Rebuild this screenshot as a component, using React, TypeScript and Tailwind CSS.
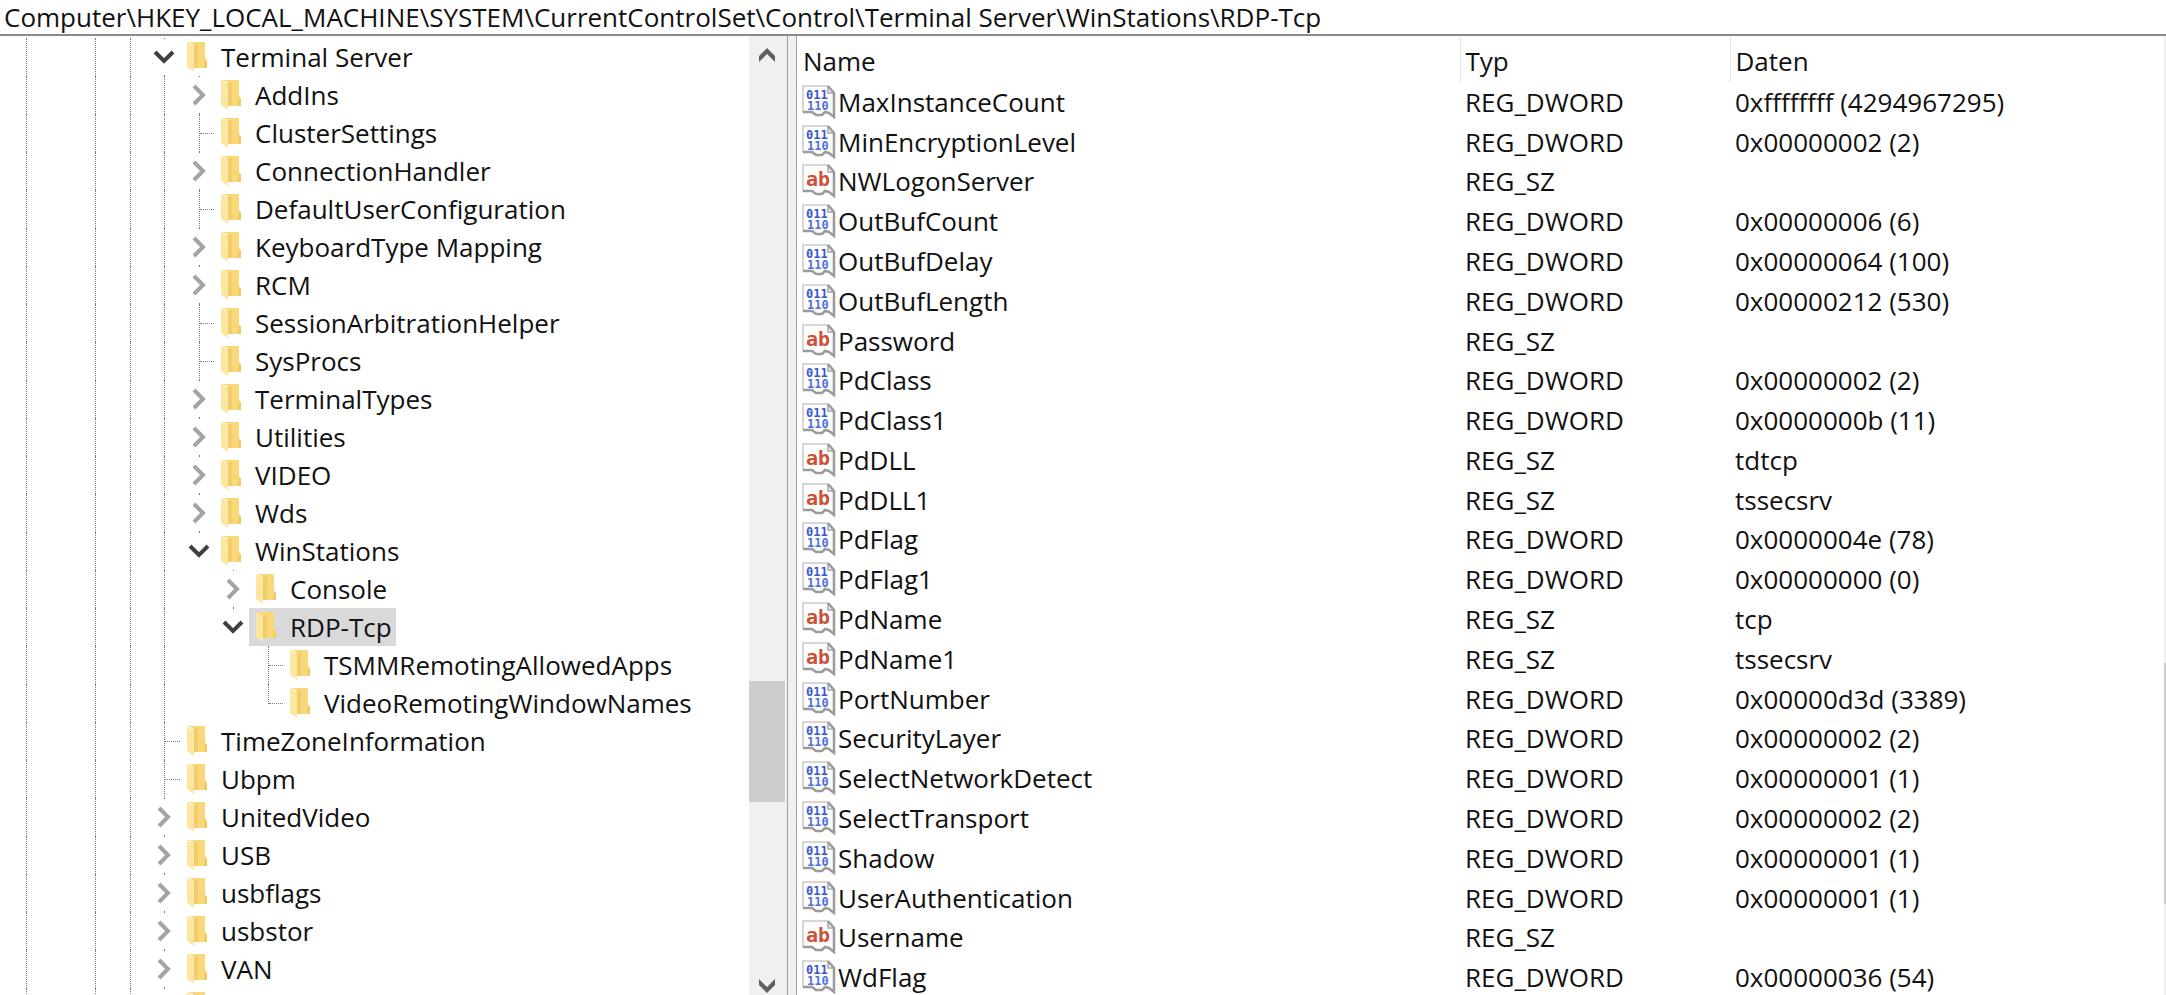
import React, { useState } from 'react';
import { clsx } from 'clsx';

interface TreeNode {
  label: string;
  depth: number;
  state?: 'open' | 'closed';
  last?: boolean;
}

interface RegistryValue {
  name: string;
  type: 'REG_DWORD' | 'REG_SZ';
  data: string;
}

const treeNodes: TreeNode[] = [
  { label: 'Terminal Server', depth: 4, state: 'open' },
  { label: 'AddIns', depth: 5, state: 'closed' },
  { label: 'ClusterSettings', depth: 5 },
  { label: 'ConnectionHandler', depth: 5, state: 'closed' },
  { label: 'DefaultUserConfiguration', depth: 5 },
  { label: 'KeyboardType Mapping', depth: 5, state: 'closed' },
  { label: 'RCM', depth: 5, state: 'closed' },
  { label: 'SessionArbitrationHelper', depth: 5 },
  { label: 'SysProcs', depth: 5 },
  { label: 'TerminalTypes', depth: 5, state: 'closed' },
  { label: 'Utilities', depth: 5, state: 'closed' },
  { label: 'VIDEO', depth: 5, state: 'closed' },
  { label: 'Wds', depth: 5, state: 'closed' },
  { label: 'WinStations', depth: 5, state: 'open', last: true },
  { label: 'Console', depth: 6, state: 'closed' },
  { label: 'RDP-Tcp', depth: 6, state: 'open', last: true },
  { label: 'TSMMRemotingAllowedApps', depth: 7 },
  { label: 'VideoRemotingWindowNames', depth: 7, last: true },
  { label: 'TimeZoneInformation', depth: 4 },
  { label: 'Ubpm', depth: 4 },
  { label: 'UnitedVideo', depth: 4, state: 'closed' },
  { label: 'USB', depth: 4, state: 'closed' },
  { label: 'usbflags', depth: 4, state: 'closed' },
  { label: 'usbstor', depth: 4, state: 'closed' },
  { label: 'VAN', depth: 4, state: 'closed' },
  { label: '', depth: 4, state: 'closed' },
];

const values: RegistryValue[] = [
  { name: 'MaxInstanceCount', type: 'REG_DWORD', data: '0xffffffff (4294967295)' },
  { name: 'MinEncryptionLevel', type: 'REG_DWORD', data: '0x00000002 (2)' },
  { name: 'NWLogonServer', type: 'REG_SZ', data: '' },
  { name: 'OutBufCount', type: 'REG_DWORD', data: '0x00000006 (6)' },
  { name: 'OutBufDelay', type: 'REG_DWORD', data: '0x00000064 (100)' },
  { name: 'OutBufLength', type: 'REG_DWORD', data: '0x00000212 (530)' },
  { name: 'Password', type: 'REG_SZ', data: '' },
  { name: 'PdClass', type: 'REG_DWORD', data: '0x00000002 (2)' },
  { name: 'PdClass1', type: 'REG_DWORD', data: '0x0000000b (11)' },
  { name: 'PdDLL', type: 'REG_SZ', data: 'tdtcp' },
  { name: 'PdDLL1', type: 'REG_SZ', data: 'tssecsrv' },
  { name: 'PdFlag', type: 'REG_DWORD', data: '0x0000004e (78)' },
  { name: 'PdFlag1', type: 'REG_DWORD', data: '0x00000000 (0)' },
  { name: 'PdName', type: 'REG_SZ', data: 'tcp' },
  { name: 'PdName1', type: 'REG_SZ', data: 'tssecsrv' },
  { name: 'PortNumber', type: 'REG_DWORD', data: '0x00000d3d (3389)' },
  { name: 'SecurityLayer', type: 'REG_DWORD', data: '0x00000002 (2)' },
  { name: 'SelectNetworkDetect', type: 'REG_DWORD', data: '0x00000001 (1)' },
  { name: 'SelectTransport', type: 'REG_DWORD', data: '0x00000002 (2)' },
  { name: 'Shadow', type: 'REG_DWORD', data: '0x00000001 (1)' },
  { name: 'UserAuthentication', type: 'REG_DWORD', data: '0x00000001 (1)' },
  { name: 'Username', type: 'REG_SZ', data: '' },
  { name: 'WdFlag', type: 'REG_DWORD', data: '0x00000036 (54)' },
];

// Ancestor levels that still have siblings further down
const guideLevels = [0, 2, 3, 4];

const FolderIcon = () => (
  <svg width="20" height="30" viewBox="0 0 20 30" className="shrink-0" aria-hidden="true">
    <path d="M1 0h17v16l2 3v7H6V2z" fill="#f8d878" />
    <path d="M7 3l4-1v24H7z" fill="#e9c25f" opacity="0.45" />
    <path d="M18 17l2 2v7h-3z" fill="#f0c95f" />
    <path d="M0 0l7 4v26l-7-5z" fill="#fde7a0" />
  </svg>
);

const ValueIcon = ({ type }: { type: RegistryValue['type'] }) => (
  <svg width="34" height="34" viewBox="0 0 34 34" className="shrink-0" aria-hidden="true">
    <path d="M1 1h25l7 7v25l-5-4-4-1-3 2h-7l-4-3H1z" fill="#fdfdfd" />
    <path d="M1 27V1h25" fill="none" stroke="#c9c9c9" strokeWidth="1.5" />
    <path d="M26 1v7h7" fill="#f4f4f4" stroke="#a8a8a8" strokeWidth="1.5" />
    <path d="M26 1l6 7v24l-5-4-4-1-3 3h-6l-4-3H1" fill="none" stroke="#9b9b9b" strokeWidth="2.5" />
    {type === 'REG_DWORD' ? (
      <g fill="#3757cc" fontFamily="'DejaVu Sans Mono', monospace" fontWeight="700" fontSize="12">
        <text x="4" y="14">011</text>
        <text x="5" y="25" fill="#4f70dc">110</text>
      </g>
    ) : (
      <text x="4" y="22" fill="#cc5238" fontFamily="'DejaVu Sans Mono', monospace" fontWeight="700" fontSize="20">
        ab
      </text>
    )}
  </svg>
);

const Expander = ({ open }: { open: boolean }) => (
  <svg width="22" height="22" viewBox="0 0 22 22" fill="none" strokeWidth="4" aria-hidden="true">
    {open ? <path d="M2 6l9 9 9-9" stroke="#404040" /> : <path d="M6 2l9 9-9 9" stroke="#a3a3a3" />}
  </svg>
);

const TreeRow = ({ node, selected, onSelect }: { node: TreeNode; selected: boolean; onSelect: () => void }) => (
  <li className="flex h-[38px] pl-[7px]" role="treeitem" aria-selected={selected}>
    {Array.from({ length: node.depth + 1 }, (_, level) => {
      const own = level === node.depth;
      return (
        <div key={level} className={clsx('flex shrink-0', level % 2 === 0 ? 'w-[35px]' : 'w-[34px]')}>
          {!own && guideLevels.includes(level) && (
            <div className="ml-[19px] border-l border-dotted border-[#7c7c7c]" />
          )}
          {own && node.state && (
            <div className="flex w-full flex-col justify-between pl-[8px]">
              <div className="ml-[11px] h-px w-px bg-[#7c7c7c]" />
              <button type="button" aria-label={`${node.state === 'open' ? 'Collapse' : 'Expand'} ${node.label}`}>
                <Expander open={node.state === 'open'} />
              </button>
              <div className={clsx('ml-[11px] h-px w-px', !node.last && 'bg-[#7c7c7c]')} />
            </div>
          )}
          {own && !node.state && (
            <div className={clsx('ml-[19px] w-4 border-l border-dotted border-[#7c7c7c]', node.last && 'h-[20px]')}>
              <div className="h-[20px] border-b border-dotted border-[#7c7c7c]" />
            </div>
          )}
        </div>
      );
    })}
    <button
      type="button"
      onClick={onSelect}
      className={clsx('flex items-center gap-[14px] whitespace-nowrap pl-[7px] pr-1', selected && 'bg-[#d9d9d9]')}
    >
      <FolderIcon />
      {node.label}
    </button>
  </li>
);

const ScrollArrow = ({ up }: { up?: boolean }) => (
  <button type="button" aria-label={up ? 'Scroll up' : 'Scroll down'} className="flex h-[18px] w-9 shrink-0 items-center justify-center">
    <svg width="16" height="14" viewBox="0 0 16 14" aria-hidden="true">
      <path d={up ? 'M8 0l8 8v6L8 6l-8 8V8z' : 'M8 14l8-8V0L8 8 0 0v6z'} fill="#606060" />
    </svg>
  </button>
);

const KeyTree = () => {
  const [selected, setSelected] = useState('RDP-Tcp');
  return (
    <nav className="flex w-[788px] shrink-0 border-r border-[#a0a0a0]" aria-label="Registry keys">
      <ul className="min-w-0 flex-1 overflow-hidden pt-[2px]" role="tree">
        {treeNodes.map((node) => (
          <TreeRow
            key={node.label}
            node={node}
            selected={node.label === selected}
            onSelect={() => setSelected(node.label)}
          />
        ))}
      </ul>
      <div className="flex w-[38px] flex-col bg-[#f0f0f0] pt-[10px]">
        <ScrollArrow up />
        <div className="flex flex-1 flex-col">
          <div className="grow-[617]" />
          <div className="w-9 grow-[121] bg-[#cdcdcd]" />
          <div className="grow-[175]" />
        </div>
        <ScrollArrow />
      </div>
    </nav>
  );
};

const ValueList = () => (
  <table className="h-[calc(100%+2px)] w-full table-fixed border-collapse text-left">
    <colgroup>
      <col className="w-[663px]" />
      <col className="w-[270px]" />
      <col />
    </colgroup>
    <thead>
      <tr className="h-[46px]">
        <th className="border-r border-[#e5e5e5] p-0 pt-[3px] pl-[6px] font-normal">Name</th>
        <th className="border-r border-[#e5e5e5] p-0 pt-[3px] pl-[5px] font-normal">Typ</th>
        <th className="p-0 pt-[3px] pl-[5px] font-normal">Daten</th>
      </tr>
    </thead>
    <tbody>
      {values.map((value) => (
        <tr key={value.name}>
          <td className="p-0 pl-[5px]">
            <div className="flex items-center gap-[2px]">
              <ValueIcon type={value.type} />
              {value.name}
            </div>
          </td>
          <td className="p-0 pl-[5px]">{value.type}</td>
          <td className="p-0 pl-[5px]">{value.data}</td>
        </tr>
      ))}
    </tbody>
  </table>
);

const App: React.FC = () => {
  const [path, setPath] = useState(
    'Computer\\HKEY_LOCAL_MACHINE\\SYSTEM\\CurrentControlSet\\Control\\Terminal Server\\WinStations\\RDP-Tcp'
  );

  return (
    <div className="flex h-screen flex-col overflow-hidden bg-white font-['Open_Sans',sans-serif] text-[26px] leading-[34px] text-[#111]">
      <input
        aria-label="Registry path"
        className="h-9 shrink-0 border-b-2 border-[#8a8a8a] px-1 outline-none"
        value={path}
        onChange={(e) => setPath(e.target.value)}
      />
      <div className="flex min-h-0 flex-1">
        <KeyTree />
        {/* Splitter between tree and values */}
        <div className="w-[9px] shrink-0 border-r border-[#a0a0a0] bg-[#f0f0f0]" />
        <main className="min-w-0 flex-1">
          <ValueList />
        </main>
        <div className="flex w-[2px] shrink-0 flex-col bg-[#f0f0f0]">
          <div className="grow-[627]" />
          <div className="grow-[241] bg-[#cdcdcd]" />
          <div className="grow-[91]" />
        </div>
      </div>
    </div>
  );
};

export default App;
